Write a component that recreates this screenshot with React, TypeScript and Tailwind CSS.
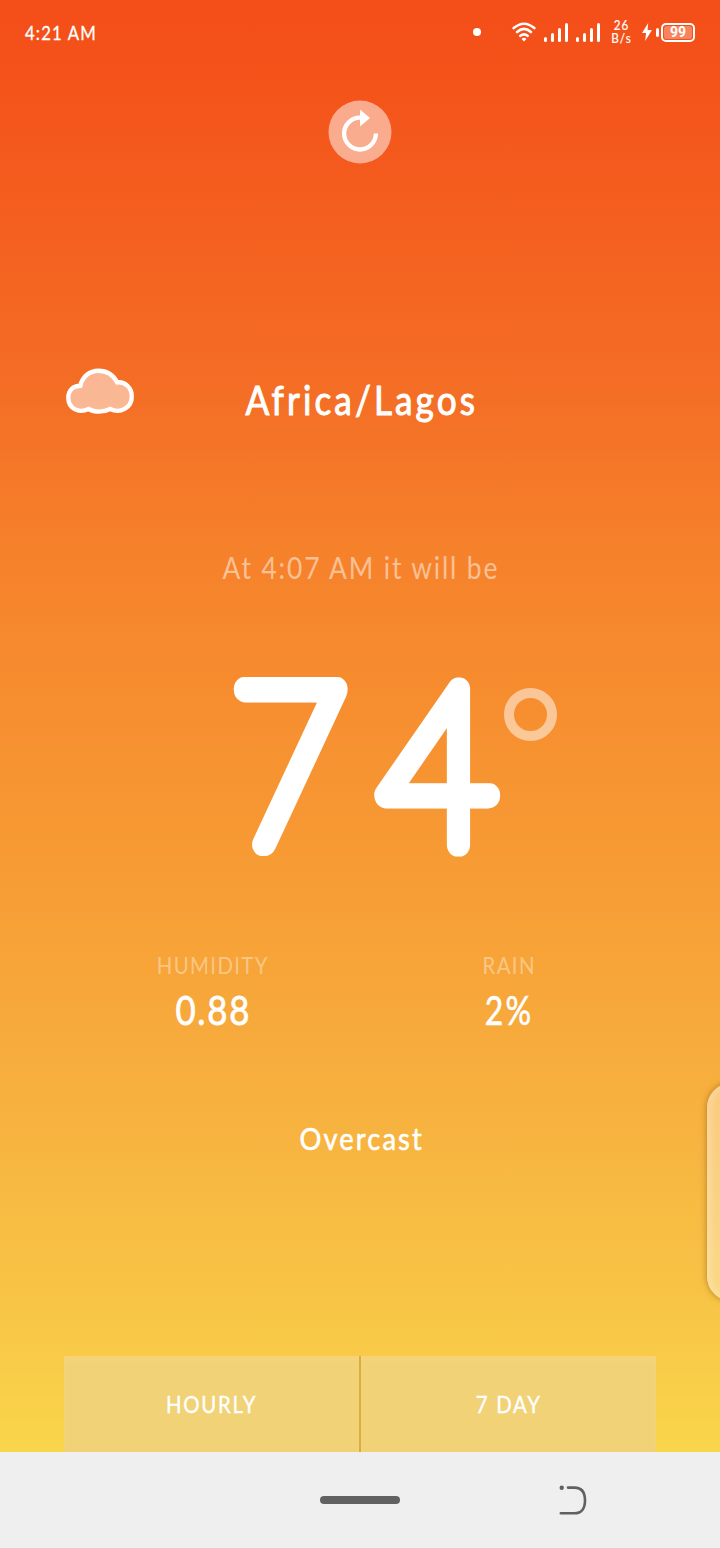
import React from "react";

function Signal() {
  return (
    <div className="flex h-[19px] w-6 items-end justify-between">
      <span className="h-[5px] w-[3px] rounded-full bg-white" />
      <span className="h-[9px] w-[3px] rounded-full bg-white" />
      <span className="h-[14px] w-[3px] rounded-full bg-white" />
      <span className="h-[19px] w-[3px] rounded-full bg-white" />
    </div>
  );
}

function StatusBar() {
  return (
    <header className="flex h-16 shrink-0 items-center pl-[25px] pr-[25px]">
      <span className="origin-left scale-x-[0.88] text-[19px] leading-none tracking-[1.3px] [-webkit-text-stroke:0.3px_white]">4:21 AM</span>
      <span className="ml-auto mr-[31px] size-2 rounded-full bg-white" />
      <svg className="mr-2 h-5 w-6" viewBox="0 0 24 20" fill="none" stroke="white" strokeWidth="2.6" strokeLinecap="round">
        <path d="M1.7 6.1Q12-2.6 22.3 6.1M5.1 10Q12 3.8 18.9 10M8.4 13.8Q12 10.8 15.6 13.8" />
        <path d="M12 19.4 9.6 17.1Q12 14.6 14.4 17.1Z" fill="white" stroke="none" />
      </svg>
      <Signal />
      <span className="w-2" />
      <Signal />
      <span className="ml-[10px] flex w-[22px] flex-col items-center pl-[2px] text-[13px] leading-[13px]">
        <span className="scale-x-90 tracking-[1px] [-webkit-text-stroke:0.2px_white]">26</span>
        <span className="scale-x-90 tracking-[1.2px] [-webkit-text-stroke:0.2px_white]">B/s</span>
      </span>
      <svg className="ml-[10px] h-[18px] w-[10px]" viewBox="0 0 10 18" fill="white">
        <path d="M6.2 0 0 10h4L3.2 18 10 7H5.6Z" />
      </svg>
      <span className="ml-[4px] mr-[2px] h-[9px] w-[3px] rounded-full bg-white" />
      <span className="flex h-[19px] w-[34px] items-center justify-center rounded-[5px] border-2 border-white p-px">
        <span className="flex h-full w-full items-center justify-center rounded-[3px] bg-white/30 font-['Roboto',sans-serif] text-[14px] font-bold leading-none">
          99
        </span>
      </span>
    </header>
  );
}

function Stat({ label, children }: { label: string; children: React.ReactNode }) {
  return (
    <div className="flex w-[296px] flex-col items-center">
      <span className="scale-x-[0.85] pl-[2px] text-[24px] leading-[34px] tracking-[1.6px] text-white/40">{label}</span>
      {children}
    </div>
  );
}

export default function App() {
  return (
    <div className="flex h-[1548px] w-[720px] flex-col overflow-hidden font-['Lato',sans-serif] text-white">
      <div className="relative flex h-[1452px] flex-col overflow-hidden bg-[linear-gradient(#f44e19_0px,#f45119_60px,#f46f26_400px,#f6822b_560px,#f79a34_850px,#f7b440_1140px,#f8c947_1345px,#f9d64b_1452px)]">
        <StatusBar />

        <div className="flex justify-center pt-9">
          <button className="flex size-16 items-center justify-center" aria-label="Refresh">
            <svg className="size-16" viewBox="0 0 64 64">
              <circle cx="32" cy="32" r="31.5" fill="white" fillOpacity=".5" />
              <path d="M32 17.7A15.9 15.9 0 1 0 47.9 33.6" fill="none" stroke="white" strokeWidth="4.3" />
              <path d="M32 9.6 42 18 32 26.5Z" fill="white" />
            </svg>
          </button>
        </div>

        <div className="mt-[186px] flex h-[100px] items-center">
          <svg className="mb-[18px] ml-16 h-12 w-[72px]" viewBox="0 0 72 48">
            <path
              d="M16.3 18.8C18.5 9.5 25.5 3.8 34.5 3.8S49.5 8.5 53.2 15.4C61 14.5 67.8 20.5 67.8 29.5 67.8 41 56 47 46.2 42 39.5 45.5 30.5 45.5 24.5 42 14.5 47 4.3 41 4.3 31 4.3 23 9.5 18.8 16.3 18.8Z"
              fill="white"
              fillOpacity=".5"
              stroke="white"
              strokeWidth="4.4"
            />
          </svg>
          <h1 className="w-[448px] scale-x-[0.88] pl-[4px] text-center text-[40px] leading-none tracking-[3.5px] [-webkit-text-stroke:1px_white]">Africa/Lagos</h1>
        </div>

        <p className="mt-[94px] scale-x-[0.88] pl-[2px] text-center text-[30px] leading-[46px] tracking-[2.1px] text-white/50">At 4:07 AM it will be</p>

        <div className="mt-[32px] flex h-[290px] justify-center pl-[66px]">
          <svg className="h-[290px] w-[275px]" viewBox="0 0 275 290" aria-label="74">
            <g
              className="font-['Lato',sans-serif] text-[223px] font-thin"
              fill="white"
              stroke="white"
              strokeWidth="23"
              strokeLinejoin="round"
              strokeLinecap="round"
            >
              <text transform="translate(1 223) scale(.91 1)">7</text>
              <text transform="translate(150 223) scale(.91 1)">4</text>
            </g>
          </svg>
          <span className="mt-[66px] size-[53px] rounded-full border-[10.5px] border-white/50" />
        </div>

        <div className="mt-[36px] flex h-[90px] justify-center">
          <Stat label="HUMIDITY">
            <span className="scale-x-[0.85] pl-[3px] text-[41px] leading-[56px] tracking-[2px] [-webkit-text-stroke:0.8px_white]">0.88</span>
          </Stat>
          <Stat label="RAIN">
            <span className="scale-x-[0.78] pl-[2px] text-[41px] leading-[56px] tracking-[3px] [-webkit-text-stroke:0.6px_white]">2%</span>
          </Stat>
        </div>

        <p className="mt-[76px] scale-x-[0.88] pl-[4px] text-center text-[31px] leading-[48px] tracking-[2.4px] [-webkit-text-stroke:0.6px_white]">Overcast</p>

        <div className="mx-16 mt-auto flex h-24">
          <button className="flex-1 border-r-2 border-[#d8ae3f] bg-[#f1d277] text-[24px] shadow-[inset_0_4px_7px_#f7d37b]">
            <span className="inline-block scale-x-[0.85] tracking-[2px] [-webkit-text-stroke:0.4px_white]">HOURLY</span>
          </button>
          <button className="flex-1 bg-[#f1d277] text-[24px] shadow-[inset_0_4px_7px_#f7d37b]">
            <span className="inline-block scale-x-[0.85] tracking-[2px] [-webkit-text-stroke:0.4px_white]">7 DAY</span>
          </button>
        </div>

        <div className="absolute right-[-36px] top-[1083px] h-[218px] w-[49px] rounded-[32px] border border-white/20 bg-white/35 shadow-[0_0_6px_rgba(120,70,0,0.55),inset_4px_0_5px_rgba(255,255,255,0.18)]" />
      </div>

      <nav className="grid h-24 grid-cols-3 items-center bg-[#efefef]">
        <span />
        <span className="h-2 w-20 justify-self-center rounded-full bg-[#616161]" />
        <svg className="ml-[78px] h-8 w-[30px]" viewBox="0 0 30 32" fill="none" stroke="#616161" strokeWidth="2.6" strokeLinecap="round">
          <path d="M10 3.6h6.5C23.5 3.6 27 8.5 27 16.5S23.5 29.3 16.5 29.3H2.8" />
          <circle cx="3.7" cy="3.8" r="2.2" fill="#616161" stroke="none" />
        </svg>
      </nav>
    </div>
  );
}
